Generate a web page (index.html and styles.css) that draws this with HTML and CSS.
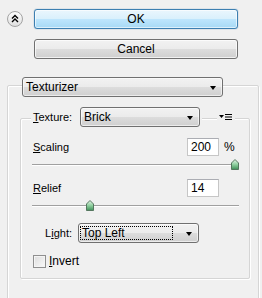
FILE: index.html
```html
<!DOCTYPE html>
<html lang="en">
<head>
  <meta charset="UTF-8" />
  <title>Texturizer</title>
  <link rel="stylesheet" href="styles.css">
</head>
<body>
  <div class="panel">
    <div class="header">
      <button class="collapse" title="Collapse">
        <svg width="16" height="16" viewBox="0 0 16 16">
          <defs>
            <linearGradient id="cg" x1="0" y1="0" x2="0" y2="1">
              <stop offset="0" stop-color="#ffffff"/>
              <stop offset="1" stop-color="#dedede"/>
            </linearGradient>
          </defs>
          <circle cx="8" cy="8" r="7.5" fill="url(#cg)" stroke="#a3a3a3"/>
          <path d="M5 7.5 L8 4.5 L11 7.5 M5 11 L8 8 L11 11" fill="none" stroke="#000" stroke-width="1.4"/>
        </svg>
      </button>
      <div class="actions">
        <button class="btn btn-default">OK</button>
        <button class="btn">Cancel</button>
      </div>
    </div>

    <div class="group outer">
      <div class="group-head">
        <div class="combo combo-filter">
          <span class="combo-text">Texturizer</span>
          <span class="arrow"></span>
        </div>
      </div>

      <div class="group inner">
        <div class="group-head split">
          <div class="head-left">
            <label class="field-label"><u>T</u>exture:</label>
            <div class="combo combo-texture">
              <span class="combo-text">Brick</span>
              <span class="arrow"></span>
            </div>
          </div>
          <div class="head-right">
            <svg width="14" height="8" viewBox="0 0 14 8">
              <path d="M0 2 H5 L2.5 5 Z" fill="#000"/>
              <path d="M6 1.5 H13 M6 4 H13 M6 6.5 H13" stroke="#000" stroke-width="1.2"/>
            </svg>
          </div>
        </div>

        <div class="row row-scaling">
          <span class="row-label"><u>S</u>caling</span>
          <input class="num" type="text" value="200">
          <span class="unit">%</span>
        </div>
        <div class="slider">
          <div class="track"></div>
          <span class="thumb" style="left: calc((100% - 8px) * 1)">
            <svg width="8" height="11" viewBox="0 0 8 11"><use href="#thumb-shape"/></svg>
          </span>
        </div>

        <div class="row row-relief">
          <span class="row-label"><u>R</u>elief</span>
          <input class="num" type="text" value="14">
          <span class="unit"></span>
        </div>
        <div class="slider">
          <div class="track"></div>
          <span class="thumb" style="left: calc((100% - 8px) * 0.27)">
            <svg width="8" height="11" viewBox="0 0 8 11"><use href="#thumb-shape"/></svg>
          </span>
        </div>

        <div class="row row-light">
          <span class="light-label">L<u>i</u>ght:</span>
          <div class="combo combo-light">
            <span class="combo-text focus">Top Left</span>
            <span class="arrow"></span>
          </div>
        </div>

        <div class="row row-invert">
          <span class="check"></span>
          <span class="check-label"><u>I</u>nvert</span>
        </div>
      </div>
    </div>
  </div>

  <svg width="0" height="0" class="defs">
    <defs>
      <linearGradient id="tg" x1="0" y1="0" x2="0" y2="1">
        <stop offset="0" stop-color="#e6f6ea"/>
        <stop offset="0.5" stop-color="#8fcf9f"/>
        <stop offset="1" stop-color="#3f8f58"/>
      </linearGradient>
      <path id="thumb-shape" d="M4 0.5 L7.5 4 V10.5 H0.5 V4 Z" fill="url(#tg)" stroke="#55775f"/>
    </defs>
  </svg>
</body>
</html>
```

FILE: styles.css
```css
body {
  margin: 0;
  background: #f0f0f0;
  font-family: "Liberation Sans", Arial, sans-serif;
  font-size: 11px;
  color: #000;
}

.panel {
  width: 262px;
  padding-top: 9px;
}

.header {
  display: flex;
  align-items: flex-start;
}

.collapse {
  margin: 2px 0 0 7px;
  padding: 0;
  width: 16px;
  height: 16px;
  border: 0;
  background: none;
  display: flex;
}

.actions {
  margin-left: 11px;
  width: 204px;
  display: flex;
  flex-direction: column;
  gap: 10px;
}

.btn {
  height: 20px;
  padding: 0;
  font-family: "Liberation Sans", Arial, sans-serif;
  font-size: 12px;
  color: #000;
  border: 1px solid #707070;
  border-radius: 3px;
  background: linear-gradient(#f2f2f2 0%, #ebebeb 50%, #dddddd 50%, #cfcfcf 100%);
  box-shadow: inset 0 0 0 1px rgba(255,255,255,0.7);
}

.btn-default {
  border-color: #3c7fb1;
  background: linear-gradient(#eaf6fd 0%, #d9f0fc 50%, #bee6fd 50%, #a7d9f5 100%);
  box-shadow: inset 0 0 0 1px rgba(255,255,255,0.6), 0 0 1px #3c7fb1;
}

/* group boxes */
.group {
  border: 1px solid #d5d5d5;
  box-shadow: inset 1px 1px 0 #fff, 1px 1px 0 #fff;
  border-radius: 2px;
}

.group-head {
  display: flex;
}

.outer {
  margin: 26px 3px 0 7px;
  padding: 0 8px 30px 12px;
}

.outer > .group-head {
  margin: -9px 0 0 2px;
}

.inner {
  margin-top: 21px;
  padding: 0 10px 10px 12px;
}

.inner > .group-head {
  margin-top: -12px;
  height: 20px;
  align-items: center;
  justify-content: space-between;
}

.head-left {
  display: flex;
  align-items: center;
  margin-left: -2px;
  padding: 0 2px;
  background: #f0f0f0;
}

.head-right {
  display: flex;
  margin-right: 4px;
  padding: 0 2px;
  background: #f0f0f0;
}

.field-label {
  width: 47px;
}

/* drop-down lists */
.combo {
  display: flex;
  align-items: center;
  height: 20px;
  box-sizing: border-box;
  border: 1px solid #707070;
  border-radius: 3px;
  background: linear-gradient(#f2f2f2 0%, #ebebeb 50%, #dddddd 50%, #cfcfcf 100%);
  box-shadow: inset 0 0 0 1px rgba(255,255,255,0.6);
  font-size: 12px;
}

.combo-text {
  flex: 1;
  padding-left: 3px;
}

.arrow {
  width: 0;
  height: 0;
  margin: 1px 6px 0 4px;
  border-left: 3.5px solid transparent;
  border-right: 3.5px solid transparent;
  border-top: 4px solid #000;
}

.combo-filter {
  width: 201px;
}

.combo-texture {
  width: 120px;
}

.combo-light {
  width: 121px;
}

.combo-text.focus {
  margin: 2px 0 2px 2px;
  padding: 0 0 0 1px;
  line-height: 12px;
  outline: 1px dotted #000;
}

.combo-light .arrow {
  margin-left: 14px;
}

/* rows */
.row {
  display: flex;
  align-items: center;
}

.row-label {
  flex: 1;
}

.row-scaling {
  margin-top: 11px;
}

.row-relief {
  margin-top: 9px;
}

.num {
  width: 32px;
  height: 18px;
  box-sizing: border-box;
  margin: 0;
  padding: 0 0 0 3px;
  border: 1px solid #c6c6c6;
  border-top-color: #abadb3;
  background: #fff;
  font-family: "Liberation Sans", Arial, sans-serif;
  font-size: 12px;
  color: #000;
}

.unit {
  width: 15px;
  margin-left: 5px;
  font-size: 12px;
}

/* sliders */
.slider {
  position: relative;
  height: 11px;
  margin: 3px 0 0 -1px;
  display: flex;
  align-items: center;
}

.track {
  flex: 1;
  height: 0;
  margin-top: 1px;
  border-top: 1px solid #a0a0a0;
  border-bottom: 1px solid #fff;
}

.thumb {
  position: absolute;
  top: 0;
  width: 8px;
  height: 11px;
  display: flex;
}

.row-light {
  margin-top: 12px;
}

.light-label {
  width: 39px;
  padding-right: 6px;
  text-align: right;
}

.row-invert {
  margin-top: 11px;
}

.check {
  width: 13px;
  height: 13px;
  box-sizing: border-box;
  border: 1px solid #8f8f8f;
  background: linear-gradient(135deg, #dcdcdc, #fafafa);
  box-shadow: inset 0 0 0 1px #f4f4f4;
}

.check-label {
  margin-left: 3px;
  font-size: 12px;
}

.defs {
  position: absolute;
}
```
